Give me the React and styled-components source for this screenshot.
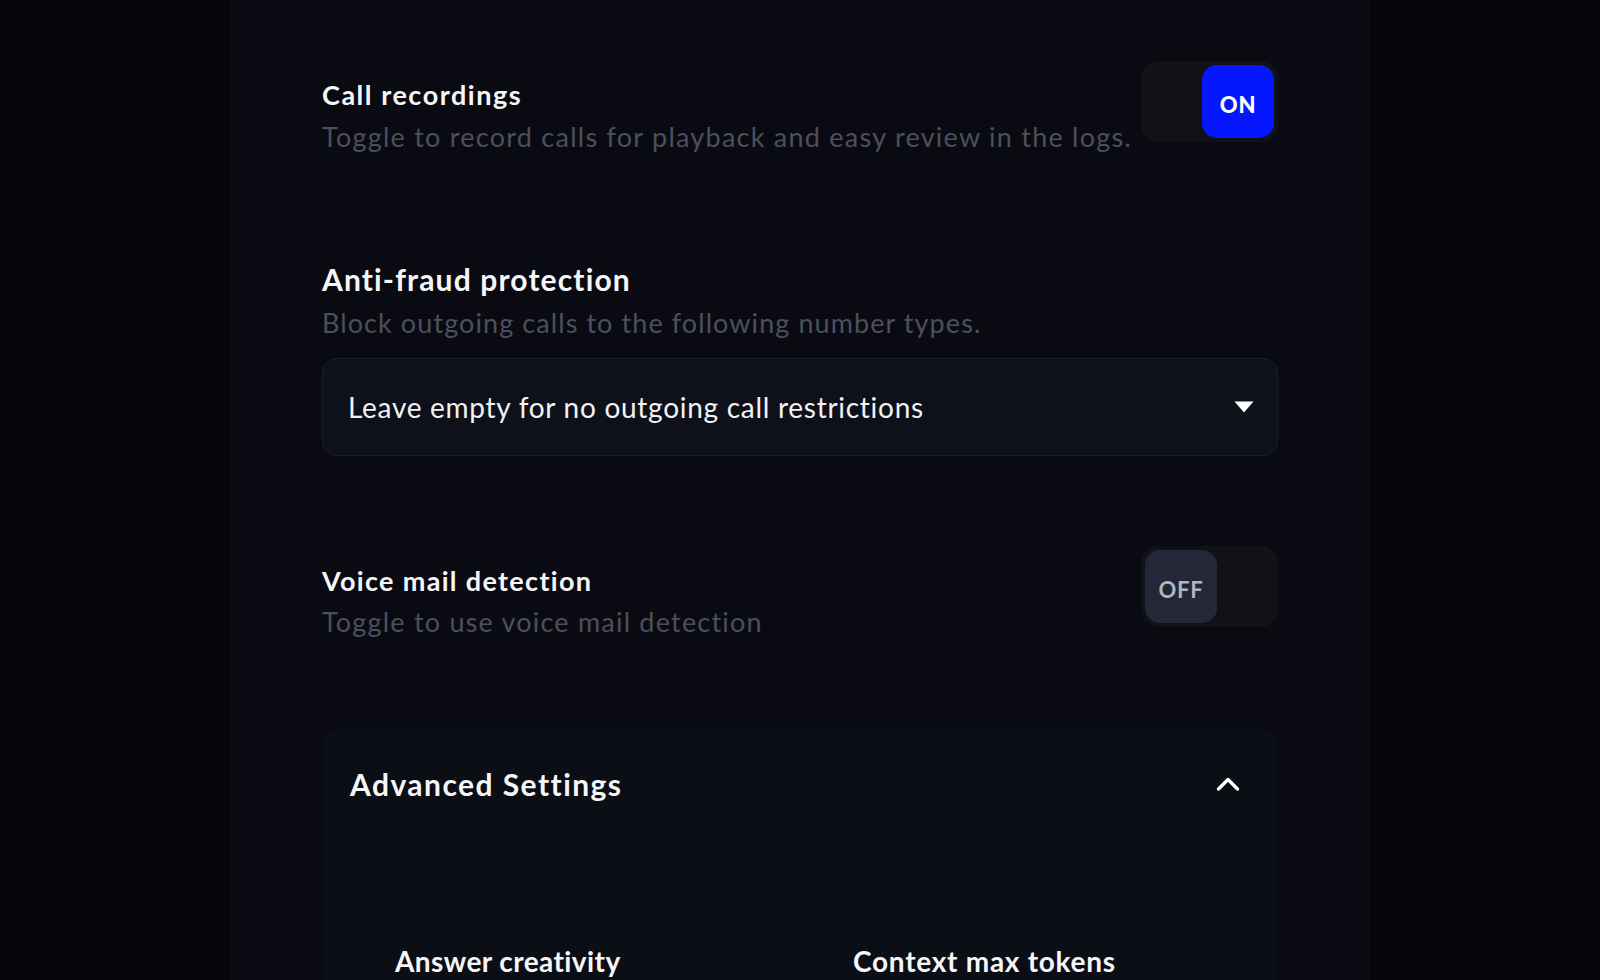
import React, { useState } from 'react';
import styled, { createGlobalStyle } from 'styled-components';

const GlobalStyle = createGlobalStyle`
  html, body {
    margin: 0;
    padding: 0;
    background: #05060a;
    font-family: Lato, "Noto Sans", sans-serif;
    color: #f4f4f6;
  }
`;

const Page = styled.div`
  min-height: 100vh;
  display: flex;
  justify-content: center;
  background: #05060a;
`;

const Panel = styled.main`
  width: 1140px;
  min-height: 100vh;
  box-sizing: border-box;
  padding: 61px 92px 0;
  background: #0a0b12;
  display: flex;
  flex-direction: column;
`;

const Section = styled.section`
  margin-top: ${(p) => p.$gap || 0}px;
`;

const Row = styled.div`
  display: flex;
  justify-content: space-between;
  align-items: flex-start;
`;

const TextBlock = styled.div`
  padding-top: ${(p) => p.$offset || 0}px;
  display: flex;
  flex-direction: column;
`;

const Title = styled.h3`
  margin: 0;
  font-size: ${(p) => p.$size || 27}px;
  line-height: ${(p) => p.$lh || 34}px;
  font-weight: 700;
  color: #f6f6f8;
  letter-spacing: ${(p) => p.$ls || 1.3}px;
`;

const Description = styled.p`
  margin: ${(p) => p.$top || 7}px 0 0;
  font-size: 27px;
  line-height: 36px;
  font-weight: 400;
  color: #4c4f5c;
  letter-spacing: ${(p) => p.$ls || 1.2}px;
`;

const Track = styled.button`
  width: 137px;
  height: 81px;
  flex-shrink: 0;
  box-sizing: border-box;
  padding: 4px;
  border: none;
  border-radius: 17px;
  background: #111218;
  display: flex;
  align-items: center;
  justify-content: ${(p) => (p.$on ? 'flex-end' : 'flex-start')};
  cursor: pointer;
`;

const Knob = styled.span`
  width: 72px;
  height: 73px;
  border-radius: 15px;
  background: ${(p) => (p.$on ? '#0417ff' : '#232738')};
  color: ${(p) => (p.$on ? '#ffffff' : '#b3b5bd')};
  font-family: Lato, sans-serif;
  font-weight: ${(p) => (p.$on ? 900 : 700)};
  font-size: 22px;
  display: flex;
  align-items: center;
  justify-content: center;
  padding-top: 6px;
  box-sizing: border-box;
  letter-spacing: 0.8px;
`;

const Select = styled.button`
  margin-top: 17px;
  width: 100%;
  height: 98px;
  box-sizing: border-box;
  padding: 0 23px 0 25px;
  border: 1px solid #1c1f2b;
  border-radius: 15px;
  background: #0f111a;
  color: #f2f2f4;
  font-family: Lato, sans-serif;
  font-size: 28px;
  letter-spacing: 0.72px;
  display: flex;
  align-items: center;
  justify-content: space-between;
  text-align: left;
  cursor: pointer;
`;

const Card = styled.div`
  margin-top: 89px;
  background: #0c0e16;
  border-radius: 18px 18px 0 0;
  flex: 1;
  display: flex;
  flex-direction: column;
`;

const CardHeader = styled.div`
  height: 110px;
  padding: 0 38px 0 28px;
  display: flex;
  align-items: center;
  justify-content: space-between;
`;

const CardTitle = styled.h2`
  margin: 0;
  font-size: 30px;
  font-weight: 700;
  color: #f6f6f8;
  letter-spacing: 1.45px;
`;

const FieldGrid = styled.div`
  padding: 105px 0 0 73px;
  display: grid;
  grid-template-columns: 458px 1fr;
`;

const FieldLabel = styled.div`
  font-size: 28px;
  line-height: 34px;
  font-weight: 700;
  color: #f6f6f8;
  letter-spacing: ${(p) => p.$ls || 0.5}px;
`;

const Toggle = ({ on, onClick }) => (
  <Track $on={on} onClick={onClick}>
    <Knob $on={on}>{on ? 'ON' : 'OFF'}</Knob>
  </Track>
);

const CaretDown = () => (
  <svg width="20" height="12" viewBox="0 0 20 12">
    <path d="M0.5 0.5 H19.5 L10 11.5 Z" fill="#ffffff" />
  </svg>
);

const ChevronUp = () => (
  <svg width="24" height="16" viewBox="0 0 24 16">
    <path d="M2.5 13 L12 3.5 L21.5 13" fill="none" stroke="#ffffff" strokeWidth="3.4" strokeLinecap="round" strokeLinejoin="round" />
  </svg>
);

export default function App() {
  const [recording, setRecording] = useState(true);
  const [voicemail, setVoicemail] = useState(false);

  return (
    <Page>
      <GlobalStyle />
      <Panel>
        <Section>
          <Row>
            <TextBlock $offset={17}>
              <Title $ls={1.53}>Call recordings</Title>
              <Description $ls={1.25}>Toggle to record calls for playback and easy review in the logs.</Description>
            </TextBlock>
            <Toggle on={recording} onClick={() => setRecording(!recording)} />
          </Row>
        </Section>

        <Section $gap={106}>
          <Title $size={30} $lh={36} $ls={1.14}>Anti-fraud protection</Title>
          <Description $top={8} $ls={1.08}>Block outgoing calls to the following number types.</Description>
          <Select>
            <span>Leave empty for no outgoing call restrictions</span>
            <CaretDown />
          </Select>
        </Section>

        <Section $gap={90}>
          <Row>
            <TextBlock $offset={18}>
              <Title $ls={1.33}>Voice mail detection</Title>
              <Description $top={6} $ls={1.21}>Toggle to use voice mail detection</Description>
            </TextBlock>
            <Toggle on={voicemail} onClick={() => setVoicemail(!voicemail)} />
          </Row>
        </Section>

        <Card>
          <CardHeader>
            <CardTitle>Advanced Settings</CardTitle>
            <ChevronUp />
          </CardHeader>
          <FieldGrid>
            <FieldLabel $ls={0.42}>Answer creativity</FieldLabel>
            <FieldLabel $ls={0.74}>Context max tokens</FieldLabel>
          </FieldGrid>
        </Card>
      </Panel>
    </Page>
  );
}
